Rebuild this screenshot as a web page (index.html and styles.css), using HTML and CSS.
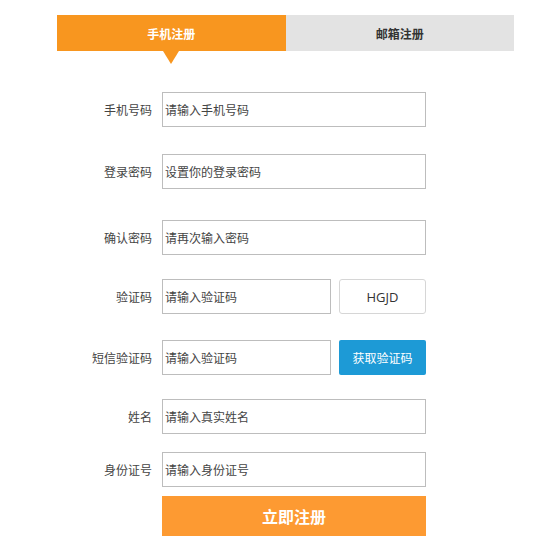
FILE: index.html
```html
<!DOCTYPE html>
<html lang="zh-CN">
<head>
<meta charset="utf-8">
<title>注册</title>
<link rel="stylesheet" href="styles.css">
</head>
<body>
<div class="page">
  <div class="tabs">
    <div class="tab tab-active">手机注册</div>
    <div class="tab">邮箱注册</div>
  </div>
  <form class="form">
    <div class="row row-1">
      <label class="label">手机号码</label>
      <input class="field" type="text" placeholder="请输入手机号码">
    </div>
    <div class="row row-2">
      <label class="label">登录密码</label>
      <input class="field" type="password" placeholder="设置你的登录密码">
    </div>
    <div class="row row-3">
      <label class="label">确认密码</label>
      <input class="field" type="password" placeholder="请再次输入密码">
    </div>
    <div class="row row-4">
      <label class="label">验证码</label>
      <input class="field field-short" type="text" placeholder="请输入验证码">
      <div class="captcha">HGJD</div>
    </div>
    <div class="row row-5">
      <label class="label">短信验证码</label>
      <input class="field field-short" type="text" placeholder="请输入验证码">
      <button class="sms" type="button">获取验证码</button>
    </div>
    <div class="row row-6">
      <label class="label">姓名</label>
      <input class="field" type="text" placeholder="请输入真实姓名">
    </div>
    <div class="row row-7">
      <label class="label">身份证号</label>
      <input class="field" type="text" placeholder="请输入身份证号">
    </div>
    <div class="row row-8">
      <span class="label"></span>
      <button class="submit" type="button">立即注册</button>
    </div>
  </form>
</div>
</body>
</html>
```
FILE: styles.css
```css
* { box-sizing: border-box; }
body {
  margin: 0;
  background: #fff;
  font-family: "Noto Sans CJK SC", "Noto Sans", sans-serif;
  color: #333;
}
.page {
  width: 457px;
  margin-left: 57px;
  padding-top: 15px;
}
.tabs {
  display: flex;
  height: 36px;
}
.tab {
  flex: 1;
  display: flex;
  align-items: center;
  justify-content: center;
  background: #e3e3e3;
  color: #333;
  font-size: 12px;
  font-weight: bold;
}
.tab-active {
  position: relative;
  background: #f8961f;
  color: #fff;
}
.tab-active::after {
  content: "";
  position: absolute;
  left: 106px;
  top: 36px;
  border-left: 8px solid transparent;
  border-right: 8px solid transparent;
  border-top: 13px solid #f8961f;
}
.form {
  display: flex;
  flex-direction: column;
}
.row {
  display: flex;
  align-items: center;
  height: 35px;
}
.row-1 { margin-top: 41px; }
.row-2 { margin-top: 27px; }
.row-3 { margin-top: 31px; }
.row-4 { margin-top: 24px; }
.row-5 { margin-top: 26px; }
.row-6 { margin-top: 24px; }
.row-7 { margin-top: 18px; }
.row-8 { margin-top: 9px; height: 40px; }
.label {
  width: 105px;
  flex: none;
  padding-right: 10px;
  text-align: right;
  font-size: 12px;
  color: #444;
}
.field {
  width: 264px;
  height: 35px;
  border: 1px solid #bdbdbd;
  padding: 0 2px;
  font-family: inherit;
  font-size: 12px;
  color: #333;
  outline: none;
  background: #fff;
}
.field::placeholder { color: #444; }
.field-short { width: 169px; }
.captcha {
  margin-left: 8px;
  width: 87px;
  height: 35px;
  border: 1px solid #d6d6d6;
  border-radius: 3px;
  display: flex;
  align-items: center;
  justify-content: center;
  font-family: "Open Sans", "Noto Sans", sans-serif;
  font-size: 13px;
  color: #333;
}
.sms {
  margin-left: 8px;
  width: 87px;
  height: 35px;
  border: none;
  border-radius: 2px;
  background: #1d9ad6;
  color: #fff;
  font-family: inherit;
  font-size: 12px;
  padding: 0;
}
.submit {
  width: 264px;
  height: 40px;
  border: none;
  background: #fd9a32;
  color: #fff;
  font-family: inherit;
  font-size: 16px;
  font-weight: bold;
  padding: 0;
}
```
